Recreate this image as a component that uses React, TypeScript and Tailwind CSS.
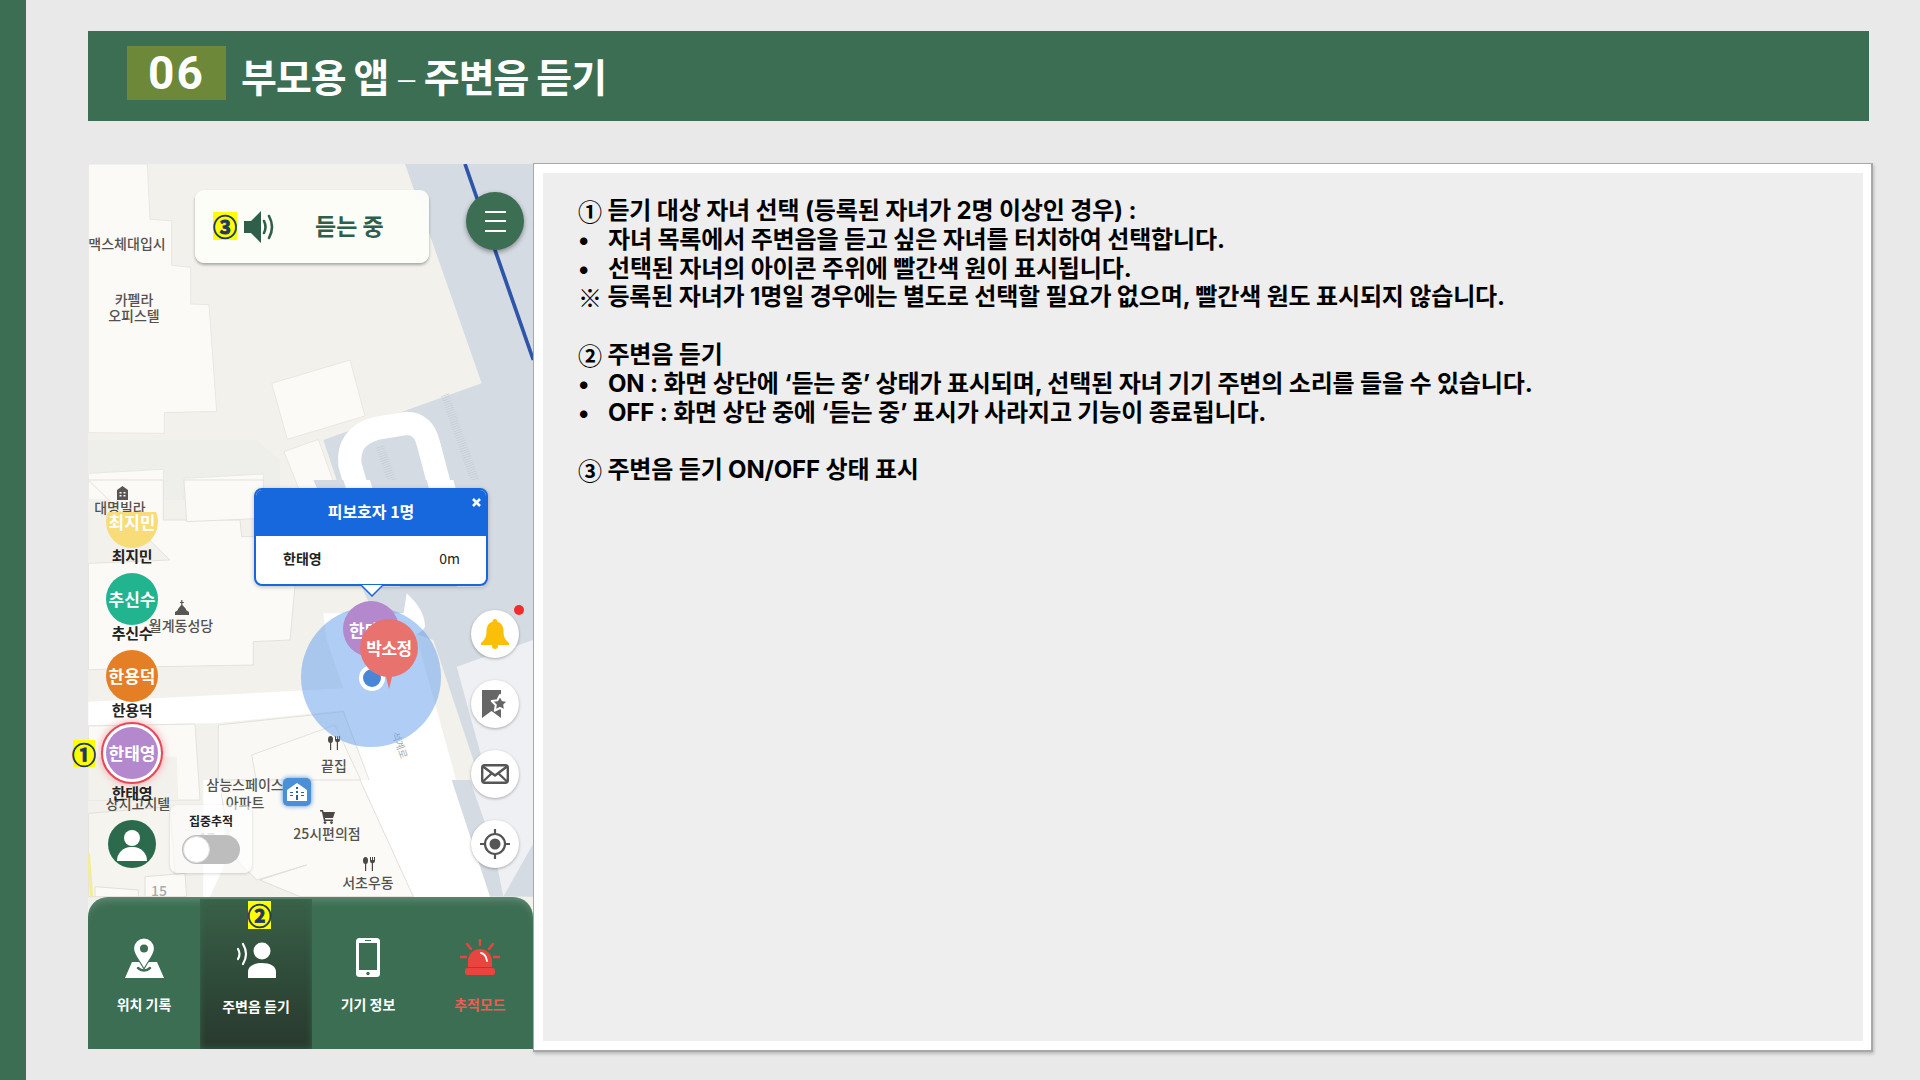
const KR = "font-['Noto_Sans_CJK_KR','Noto_Sans',sans-serif]";

function Num({ n, className }: { n: string; className: string }) {
  return (
    <div className={`absolute flex items-center justify-center bg-[#ffff00] text-[24px] font-bold leading-none text-[#1f3864] [-webkit-text-stroke:0.8px_#1f3864] ${className}`}>
      {n}
    </div>
  );
}

function MapBackground() {
  return (
    <svg className="absolute inset-0" width="445" height="885" viewBox="88 164 445 885">
      <rect x="88" y="164" width="445" height="885" fill="#f3f1ec" />
      {/* top area, coordinates taken at 3x */}
      <g transform="translate(60,160) scale(0.33333)" stroke="#e9e7e1" strokeWidth="3">
        <polygon fill="#fbfaf7" points="92,12 262,12 270,178 335,182 335,316 392,322 392,432 447,434 470,754 313,758 313,820 85,818 85,12" />
        <polygon fill="#d5dbe3" stroke="none" points="1035,12 1420,12 1420,1020 850,1020 790,840 1265,670" />
        <polygon fill="#fbfaf7" points="635,670 870,600 915,768 682,838" />
        <polygon fill="#fbfaf7" points="672,875 775,838 840,1020 730,1020" />
        <path d="M85 840 H590 L660 900 V1020 H85Z" fill="#eeeeea" stroke="none" />
        <polygon fill="#fbfaf7" points="85,940 310,928 310,1020 85,1020" />
        <polygon fill="#fbfaf7" points="372,955 610,942 610,1020 372,1020" />
        <path d="M900 1020 L870 915 Q860 830 950 805 L1040 790 Q1090 790 1105 850 L1150 1020" fill="none" stroke="#ffffff" strokeWidth="70" />
        <path d="M1215 12 L1420 600" stroke="#2f55a8" strokeWidth="11" fill="none" />
        <path d="M1155 705 L1265 1020" stroke="#c6ccd4" strokeWidth="26" strokeDasharray="2 5" fill="none" />
        <path d="M960 860 L1015 1020" stroke="#c6ccd4" strokeWidth="26" strokeDasharray="2 5" fill="none" />
      </g>
      {/* middle area */}
      <g transform="translate(60,480) scale(0.33333)" stroke="#e4e2dc" strokeWidth="3">
        <polygon fill="#f3f1ec" stroke="none" points="85,60 720,60 940,960 85,960" />
        <polygon fill="#fbfaf7" points="85,0 310,0 310,120 540,120 545,170 720,170 705,320 690,480 580,485 580,555 300,560 85,570 85,250 330,240" />
        <polygon fill="#fbfaf7" points="372,0 610,0 610,115 380,125" />
        <polygon fill="#d5dbe3" stroke="none" points="760,0 1420,0 1420,960 1280,960 1120,480 950,420" />
        <path d="M850 0 H930 L1020 320 H950Z M1100 0 H1180 L1270 320 H1190Z" fill="#ffffff" stroke="none" />
        <path d="M1040 340 Q1095 390 1095 440 Q1080 470 1020 470Z" fill="#ffffff" stroke="none" />
        <path d="M85 665 L850 625 L860 690 L470 730 L85 735Z" fill="#ffffff" stroke="none" />
        <path d="M850 625 L800 480 L790 400 L1050 400 L1205 960 L950 960 L850 690Z" fill="#ffffff" stroke="none" />
        <path d="M1190 560 L1420 480 V960 H1300Z" fill="#eef0f3" stroke="none" />
        <polygon fill="#f9f8f4" points="475,735 850,695 950,960 475,960" />
        <polygon fill="#fbfaf7" points="575,825 825,735 930,960 600,960" />
        <polygon fill="#fbfaf7" points="85,738 405,732 420,960 85,960" />
        <polygon fill="#f3f1ec" stroke="none" points="85,830 350,830 355,960 85,960" />
      </g>
      {/* lower area */}
      <g transform="translate(60,780) scale(0.33333)" stroke="#e2e0da" strokeWidth="3">
        <polygon fill="#ffffff" stroke="none" points="900,0 1300,0 1400,350 1060,350" />
        <polygon fill="#d5dbe3" stroke="none" points="1175,0 1420,0 1420,350 1290,350" />
        <polygon fill="#eef0f3" stroke="none" points="1230,0 1420,0 1420,190 1330,350 1300,200" />
        <polygon fill="#fbfaf7" points="475,0 900,0 1060,350 720,350 600,300 740,255 590,300 520,230" />
        <polygon fill="#f6f4ef" points="85,100 330,80 350,350 85,350" />
        <polygon fill="#fbfaf7" points="255,290 375,280 380,350 255,350" />
        <polygon fill="#fbfaf7" points="105,320 235,330 235,350 105,350" />
        <polygon fill="#ffffff" stroke="none" points="430,0 480,0 500,240 450,350 430,350" />
        <path d="M85 220 L95 350" stroke="#f2ec9c" strokeWidth="10" />
      </g>
    </svg>
  );
}

function MapLabel({ text, className }: { text: string; className: string }) {
  return (
    <div className={`absolute -translate-x-1/2 -translate-y-1/2 whitespace-pre text-center text-[14px] leading-[16px] font-medium text-[#55524e] ${className}`}>
      {text}
    </div>
  );
}

function FoodIcon({ className }: { className: string }) {
  return (
    <svg className={`absolute ${className}`} width="14" height="14" viewBox="0 0 14 14" fill="#4b4844">
      <ellipse cx="3.5" cy="3.5" rx="2.5" ry="3.5" />
      <rect x="3" y="5" width="1.2" height="9" />
      <path d="M8 0h1v3h1V0h1v3h1V0h1v4a2.4 2.4 0 0 1-2 2.2V14h-1.2V6.200A2.4 2.4 0 0 1 8 4Z" />
    </svg>
  );
}

function Avatar({ name, color, selected }: { name: string; color: string; selected?: boolean }) {
  return (
    <div className="flex h-[77px] w-[100px] flex-col items-center">
      <div className="relative flex h-[52px] w-[52px] shrink-0 items-center justify-center">
        {selected && (
          <div className="absolute -inset-[5px] rounded-full border-[2px] border-[#e8475a] bg-white shadow-[0_0_8px_#f0a0a0]" />
        )}
        <div className={`relative flex h-[52px] w-[52px] items-center justify-center rounded-full text-[17px] font-bold text-white ${color}`}>
          {name}
        </div>
      </div>
      <div className={`relative ${selected ? "mt-[3px]" : "-mt-[3px]"} text-[15px] font-semibold leading-[22px] tracking-[-0.3px] text-[#222]`}>{name}</div>
    </div>
  );
}

function SideButton({ children }: { children: React.ReactNode }) {
  return (
    <div className="flex h-[48px] w-[48px] items-center justify-center rounded-full bg-white shadow-[0_1px_3px_rgba(0,0,0,0.3)]">
      {children}
    </div>
  );
}

function NavItem({ label, active, red, children }: { label: string; active?: boolean; red?: boolean; children: React.ReactNode }) {
  return (
    <div className={`flex w-[112px] shrink-0 flex-col items-center pt-[40px] ${active ? "mt-[2px] bg-gradient-to-b from-[#3a6149] via-[#2f4c3a] to-[#29392e] shadow-[inset_0_0_6px_rgba(60,110,83,0.8)]" : ""}`}>
      <div className="flex h-[42px] items-center justify-center">{children}</div>
      <div className={`mt-[15px] text-[14px] font-semibold leading-[20px] ${red ? "text-[#ee5b52]" : "text-white"}`}>{label}</div>
    </div>
  );
}

function MapPanel() {
  return (
    <div className="relative h-[885px] w-[445px] shrink-0">
      <MapBackground />

      <MapLabel text="맥스체대입시" className="left-[39px] top-[79px]" />
      <MapLabel text={"카펠라\n오피스텔"} className="left-[46px] top-[143px]" />
      <MapLabel text="대명빌라" className="left-[32px] top-[343px]" />
      <MapLabel text="월계동성당" className="left-[93px] top-[461px]" />
      <MapLabel text="끝집" className="left-[246px] top-[601px]" />
      <MapLabel text={"삼능스페이스\n아파트"} className="left-[157px] top-[629px] leading-[18px]" />
      <MapLabel text="상지고지텔" className="left-[50px] top-[639px]" />
      <MapLabel text="25시편의점" className="left-[239px] top-[669px]" />
      <MapLabel text="서초우동" className="left-[280px] top-[718px]" />
      <MapLabel text="17" className="left-[119px] top-[673px] text-[#bbb]!" />
      <MapLabel text="15" className="left-[71px] top-[726px] text-[#aaa]!" />
      <MapLabel text="석계로" className="left-[312px] top-[581px] rotate-[70deg] text-[10px]! font-normal! text-[#aaa]!" />

      {/* poi icons */}
      <svg className="absolute left-[29px] top-[322px]" width="11" height="14" viewBox="0 0 11 14" fill="#5a5753">
        <path d="M5.5 0 11 4v10H0V4Zm-3 6v1.5h2V6Zm4 0v1.5h2V6Zm-4 3v1.5h2V9Zm4 0v1.5h2V9Z" />
      </svg>
      <svg className="absolute left-[87px] top-[436px]" width="14" height="15" viewBox="0 0 14 15" fill="#5a5753">
        <path d="M6.2 0h1.2v2h1.5v1H7.4v2L11 9v1l3 2v3H0v-3l3-2V9l3.2-4V3H5V2h1.2Z" />
      </svg>
      <FoodIcon className="left-[239px] top-[572px]" />
      <FoodIcon className="left-[274px] top-[693px]" />
      <svg className="absolute left-[232px] top-[646px]" width="15" height="14" viewBox="0 0 15 14" fill="#4b4844">
        <path d="M0 0h3l.6 2H15l-2 6H5l.4 1.5H13V11H4L1.800 1.500H0Z" />
        <circle cx="5" cy="12.6" r="1.4" />
        <circle cx="11.5" cy="12.6" r="1.4" />
      </svg>
      <div className="absolute left-[195px] top-[614px] flex h-[28px] w-[28px] items-center justify-center rounded-[5px] bg-[#4b8fd6] shadow-[0_0_5px_#4b8fd6]">
        <svg width="22" height="20" viewBox="0 0 22 20">
          <path d="M1 8 11 1l10 7v11H1Z" fill="#fff" />
          <path d="M10 5h2v2h-2Zm0 4h2v2h-2Zm-6 1h3v1H4Zm11 0h3v1h-3ZM4 13h3v1H4Zm11 0h3v1h-3Zm-5 0h2v5h-2Z" fill="#2f5f94" />
        </svg>
      </div>

      {/* location circle */}
      <div className="absolute left-[213px] top-[443px] h-[140px] w-[140px] rounded-full bg-[#5f9cec]/50" />
      <div className="absolute left-[271px] top-[501px] h-[26px] w-[26px] rounded-full border-[4px] border-white bg-[#4a86d8]" />
      <div className="absolute left-[255px] top-[437px] flex h-[56px] w-[56px] items-start rounded-full bg-[#b388cc] pl-[6px] pt-[16px] text-[17px] font-bold text-white">한태</div>
      <div className="absolute left-[272px] top-[455px]">
        <div className="absolute left-[24px] top-[50px] h-[20px] w-[10px] bg-[#e8736e] [clip-path:polygon(0_0,100%_0,50%_100%)]" />
        <div className="relative flex h-[58px] w-[58px] items-center justify-center rounded-full bg-[#e8736e] text-[17px] font-bold tracking-[-0.5px] text-white">박소정</div>
      </div>

      {/* popup */}
      <div className="absolute left-[166px] top-[324px] h-[98px] w-[234px] overflow-hidden rounded-[8px] border-[2px] border-[#1668dc] bg-white shadow-[0_1px_4px_rgba(0,0,0,0.25)]">
        <div className="relative flex h-[46px] items-center justify-center bg-[#1668dc] pb-[4px] text-[16px] font-bold text-white">
          피보호자 1명
          <svg className="absolute right-[5px] top-[8px]" width="9" height="9" viewBox="0 0 9 9" stroke="#fff" strokeWidth="2.6">
            <path d="M1 1l7 7M8 1 1 8" />
          </svg>
        </div>
        <div className="flex h-[46px] items-center justify-between pb-[2px] pl-[27px] pr-[26px] text-[14px] font-semibold text-[#222]">
          <span>한태영</span>
          <span className="font-normal">0m</span>
        </div>
      </div>
      <svg className="absolute left-[273px] top-[421px]" width="22" height="12" viewBox="0 0 22 12">
        <path d="M0 0 11 11 22 0" fill="#fff" stroke="#1668dc" strokeWidth="1.500" />
      </svg>

      {/* listening status */}
      <div className="absolute left-[107px] top-[26px] flex h-[73px] w-[234px] items-center rounded-[9px] bg-[#fdfdf9]/95 pl-[18px] shadow-[0_2px_3px_rgba(0,0,0,0.3)]">
        <div className="h-[28px] w-[24px]" />
        <svg className="ml-[7px]" width="31" height="32" viewBox="0 0 31 32" fill="#2f5f4a">
          <path d="M0 10h7L17 0v32L7 22H0Z" />
          <path d="M20 10q3 6 0 12M25 5q6 11 0 22" fill="none" stroke="#2f5f4a" strokeWidth="2.600" strokeLinecap="round" />
        </svg>
        <div className="ml-[40px] pb-[2px] text-[23px] font-bold leading-none text-[#2f5f4a]">듣는 중</div>
      </div>
      <Num n="③" className="left-[125px] top-[48px] h-[28px] w-[24px]" />

      {/* menu */}
      <div className="absolute left-[378px] top-[28px] flex h-[58px] w-[58px] flex-col items-center justify-center gap-[7.500px] rounded-full bg-[#3c6e53] shadow-[0_2px_5px_rgba(0,0,0,0.4)]">
        <div className="h-[2px] w-[21px] bg-white" />
        <div className="h-[2px] w-[21px] bg-white" />
        <div className="h-[2px] w-[21px] bg-white" />
      </div>

      {/* children list */}
      <div className="absolute left-[-6px] top-[348px] h-[300px] overflow-hidden">
        <div className="-mt-[16px]">
          <Avatar name="최지민" color="bg-[#f8dc78]" />
          <Avatar name="추신수" color="bg-[#22b48e]" />
          <Avatar name="한용덕" color="bg-[#e47f25]" />
          <Avatar name="한태영" color="bg-[#b388cc]" selected />
        </div>
      </div>
      <Num n="①" className="left-[-15px] top-[576px] h-[27px] w-[22px]" />

      {/* side buttons */}
      <div className="absolute left-[383px] top-[446px] flex flex-col gap-[22px]">
        <SideButton>
          <svg width="28" height="30" viewBox="0 0 28 30" fill="#fbbf0a">
            <path d="M14 0c1.600 0 2.400 1 2.400 2.800C20.500 4 22.500 7.500 22.500 12c0 6 1.500 8.500 5.500 12v2H0v-2c4-3.500 5.500-6 5.500-12 0-4.500 2-8 6.100-9.200C11.600 1 12.400 0 14 0Z" />
            <circle cx="14" cy="27" r="3" />
          </svg>
        </SideButton>
        <SideButton>
          <svg width="30" height="30" viewBox="0 0 30 30">
            <path d="M2 1h19v28l-9.500-7L2 29Z" fill="#666" />
            <path d="m20 6 2.600 5.200 5.700.8-4.100 4 1 5.700-5.200-2.700-5.200 2.700 1-5.700-4.100-4 5.700-.8Z" fill="#666" stroke="#fff" strokeWidth="2" strokeLinejoin="round" />
          </svg>
        </SideButton>
        <SideButton>
          <svg width="28" height="20" viewBox="0 0 28 20" fill="none" stroke="#555" strokeWidth="2.400" strokeLinejoin="round">
            <rect x="1.200" y="1.200" width="25.600" height="17.600" rx="2.500" />
            <path d="m2 2.500 12 9 12-9M2 17.500l8.500-8M26 17.500l-8.500-8" />
          </svg>
        </SideButton>
        <SideButton>
          <svg width="32" height="32" viewBox="0 0 32 32" fill="none" stroke="#555" strokeWidth="2.200">
            <circle cx="16" cy="16" r="10" />
            <circle cx="16" cy="16" r="5.500" fill="#555" stroke="none" />
            <path d="M16 1v5M16 26v5M1 16h5M26 16h5" />
          </svg>
        </SideButton>
      </div>
      <div className="absolute left-[426px] top-[441px] h-[10px] w-[10px] rounded-full bg-[#f02c2c]" />

      {/* my location + tracking */}
      <div className="absolute left-[20px] top-[656px] h-[48px] w-[48px] overflow-hidden rounded-full bg-[#2b6a4c]">
        <div className="mx-auto mt-[10px] h-[16px] w-[16px] rounded-full bg-white" />
        <div className="mx-auto mt-[1px] h-[14px] w-[30px] rounded-t-full bg-white" />
      </div>
      <div className="absolute left-[82px] top-[641px] flex h-[68px] w-[82px] flex-col items-center rounded-[8px] bg-white/60 pt-[7px] shadow-[0_1px_3px_rgba(0,0,0,0.15)]">
        <div className="text-[12px] font-semibold leading-[18px] text-[#222]">집중추적</div>
        <div className="mt-[5px] flex h-[29px] w-[58px] items-center rounded-full bg-[#bdbdbd] pl-[1px]">
          <div className="h-[27px] w-[27px] rounded-full border border-[#ddd] bg-white" />
        </div>
      </div>

      {/* bottom navigation */}
      <div className="absolute bottom-0 left-0 flex h-[152px] w-[445px] overflow-hidden rounded-t-[20px] bg-[#3c6e53] shadow-[inset_0_8px_10px_-6px_rgba(255,255,255,0.25)]">
        <NavItem label="위치 기록">
          <svg width="39" height="40" viewBox="0 0 39 40" fill="#fff">
            <path d="M7 24h25l7 16H0Z" />
            <path d="M13 30q6 5 12 0" fill="none" stroke="#3c6e53" strokeWidth="2.400" strokeLinecap="round" />
            <path d="M19 0a10.500 10.500 0 0 1 10.500 10.500C29.500 17 23 23 19 31c-4-8-10.500-14-10.500-20.500A10.500 10.500 0 0 1 19 0Z" stroke="#3c6e53" strokeWidth="1.200" />
            <circle cx="19" cy="10.500" r="4" fill="#3c6e53" />
          </svg>
        </NavItem>
        <NavItem label="주변음 듣기" active>
          <svg width="39" height="38" viewBox="0 0 39 38" fill="#fff">
            <circle cx="25" cy="10" r="8.500" />
            <path d="M11 37V31c0-6 6-9 14-9s14 3 14 9v6Z" />
            <path d="M1 8q3 5 0 10M6 3q6 10 0 20" fill="none" stroke="#fff" strokeWidth="2.200" strokeLinecap="round" />
          </svg>
        </NavItem>
        <NavItem label="기기 정보">
          <svg width="24" height="40" viewBox="0 0 24 40">
            <rect x="0" y="0" width="24" height="39" rx="3.500" fill="#fff" />
            <rect x="3" y="5" width="18" height="27" fill="#3c6e53" />
            <circle cx="12" cy="35.500" r="1.700" fill="#3c6e53" />
            <rect x="9" y="2" width="6" height="1" fill="#3c6e53" />
          </svg>
        </NavItem>
        <NavItem label="추적모드" red>
          <svg width="40" height="38" viewBox="0 0 40 38" fill="#e8453f">
            <path d="M8 28V22a12 12 0 0 1 24 0v6Z" />
            <rect x="5" y="29" width="30" height="7" rx="2.500" />
            <path d="M20 0v6M7 5l4 5M33 5l-4 5M0 18h6M34 18h6" stroke="#e8453f" strokeWidth="2.400" strokeLinecap="round" />
            <path d="M21 14q5 1 6 8" fill="none" stroke="#fff" strokeWidth="1.800" strokeLinecap="round" />
          </svg>
        </NavItem>
      </div>
      <Num n="②" className="left-[160px] top-[737px] h-[28px] w-[23px]" />
    </div>
  );
}

const lines = [
  "① 듣기 대상 자녀 선택 (등록된 자녀가 2명 이상인 경우) :",
  "•\t자녀 목록에서 주변음을 듣고 싶은 자녀를 터치하여 선택합니다.",
  "•\t선택된 자녀의 아이콘 주위에 빨간색 원이 표시됩니다.",
  "※ 등록된 자녀가 1명일 경우에는 별도로 선택할 필요가 없으며, 빨간색 원도 표시되지 않습니다.",
  "",
  "② 주변음 듣기",
  "•\tON : 화면 상단에 ‘듣는 중’ 상태가 표시되며, 선택된 자녀 기기 주변의 소리를 들을 수 있습니다.",
  "•\tOFF : 화면 상단 중에 ‘듣는 중’ 표시가 사라지고 기능이 종료됩니다.",
  "",
  "③ 주변음 듣기 ON/OFF 상태 표시",
];

function Line({ text }: { text: string }) {
  if (!text) return <div className="h-[28.800px]" />;
  const [bullet, rest] = text.includes("\t") ? text.split("\t") : [null, text];
  const mark = !bullet && "①②③※".includes(rest[0]) ? rest[0] : null;
  return (
    <div className="flex h-[28.800px] items-center whitespace-pre font-['Inter','Noto_Sans_CJK_KR',sans-serif] text-[24px] font-bold leading-[28.800px] tracking-[-0.150px] text-black">
      {bullet && <span className="w-[30px] shrink-0">{bullet}</span>}
      {mark && <span className={KR}>{mark}</span>}
      <span>{mark ? rest.slice(1) : rest}</span>
    </div>
  );
}

export default function App() {
  return (
    <div className={`flex h-[1080px] w-[1920px] overflow-hidden bg-[#e9e9e9] ${KR}`}>
      <div className="h-full w-[26px] shrink-0 bg-[#3c6e53]" />
      <div className="pl-[62px] pt-[31px]">
        <div className="flex h-[90px] w-[1781px] items-center bg-[#3c6e53] pb-[6px] pl-[39px]">
          <div className="flex h-[54px] w-[99px] items-center justify-center bg-[#6d8838] font-['Roboto',sans-serif] text-[46px] font-bold leading-none tracking-[2px] text-white">
            06
          </div>
          <div className="ml-[15px] pt-[4px] text-[39px] font-bold leading-none tracking-[-1px] text-white">
            부모용 앱 <span className="font-light">–</span> 주변음 듣기
          </div>
        </div>
        <div className="mt-[42px] flex items-start">
          <div className="mt-[1px]">
            <MapPanel />
          </div>
          <div className="h-[889px] w-[1340px] border-b-[2px] border-r-[2px] border-t border-l border-[#a8a8a8] bg-white pb-[9px] pl-[9px] pr-[8px] pt-[9px] shadow-[1px_2px_3px_rgba(0,0,0,0.2)]">
            <div className="h-full w-full bg-[#eeeeee] pl-[35px] pt-[24px]">
              {lines.map((l, i) => (
                <Line key={i} text={l} />
              ))}
            </div>
          </div>
        </div>
      </div>
    </div>
  );
}
